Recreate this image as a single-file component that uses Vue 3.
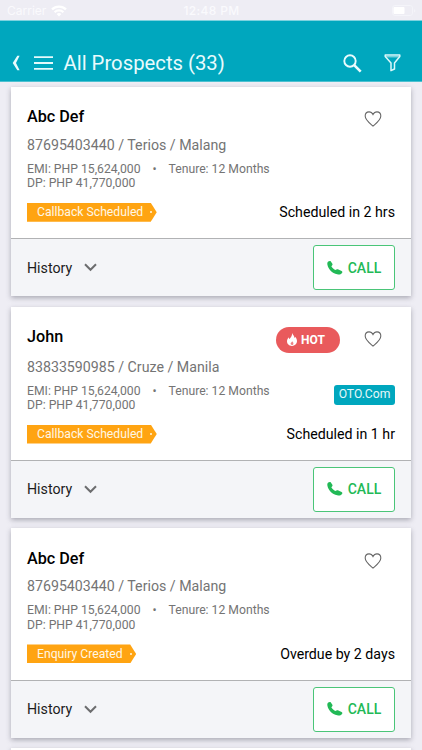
<script setup>
const prospects = [
  { name: 'Abc Def', info: '87695403440 / Terios / Malang', status: 'Callback Scheduled', due: 'Scheduled in 2 hrs' },
  { name: 'John', info: '83833590985 / Cruze / Manila', status: 'Callback Scheduled', due: 'Scheduled in 1 hr', hot: true, source: 'OTO.Com' },
  { name: 'Abc Def', info: '87695403440 / Terios / Malang', status: 'Enquiry Created', due: 'Overdue by 2 days' },
]
</script>

<template>
  <div class="screen">
    <div class="statusbar">
      <div class="carrier">
        <span>Carrier</span>
        <svg width="16" height="12" viewBox="0 0 16 12" fill="none" stroke="#fff" stroke-width="2.2">
          <path d="M1 4.4a10 10 0 0 1 14 0M3.6 7.2a6.3 6.3 0 0 1 8.8 0" />
          <path d="M8 11.5 5.6 9.1a3.4 3.4 0 0 1 4.8 0z" fill="#fff" stroke="none" />
        </svg>
      </div>
      <div class="clock">12:48 PM</div>
      <div class="battery">
        <svg width="24" height="12" viewBox="0 0 24 12">
          <rect x=".5" y=".5" width="20" height="10" rx="2.5" fill="none" stroke="#f4f4f9" />
          <rect x="1.5" y="2" width="11" height="7" rx="1" fill="#fff" />
          <path d="M22 4v3.5q1.300-.6 1.300-1.750T22 4z" fill="#f4f4f9" />
        </svg>
      </div>
    </div>

    <header class="appbar">
      <svg class="back" width="8" height="16" viewBox="0 0 8 16" fill="#e9fbfd"><path d="M5.300.8H7.600L4 8l3.600 7.200H5.300L.7 8z" /></svg>
      <svg class="menu" width="19" height="14" viewBox="0 0 19 14" fill="#e4fafc">
        <path d="M0 .2h19v1.900H0zM0 6.100h19v1.900H0zM0 11.900h19v1.900H0z" />
      </svg>
      <h1>All Prospects (33)</h1>
      <svg class="search" width="19" height="19" viewBox="0 0 19 19" fill="none" stroke="#e9fbfd">
        <circle cx="7" cy="7" r="5.700" stroke-width="1.900" />
        <path d="M11.200 11.200 17.700 17.700" stroke-width="2.600" />
      </svg>
      <svg class="filter" width="17" height="18" viewBox="0 0 17 18" fill="none" stroke="#dcf8fa" stroke-width="1.500" stroke-linejoin="round">
        <path d="M1.200 1h14.600v1.600L10.500 9v6l-3.500 1.700V9L1.200 2.600z" /><path d="M1.500 2.800h14" stroke-width=".8" />
      </svg>
    </header>

    <main class="list">
      <article v-for="(p, i) in prospects" :key="i" class="card">
        <div class="body">
          <div class="top" :class="{ tall: p.hot }">
            <h2>{{ p.name }}</h2>
            <span v-if="p.hot" class="hot">
              <svg width="10" height="13" viewBox="0 0 10 13"><path d="M5.100 0C6 2.200 7.500 3 7.500 5.100c.5-.3.600-.8.600-1.300C9.300 5 10 6.600 10 8.100 10 11 7.800 13 5 13S0 11 0 8.300c0-1.900 1-3 1.700-4.100.1 1 .4 1.500.8 1.700C3.900 4.600 5.200 2.700 5.100 0z" fill="#fff" /><path d="M5.100 8.200c.7.900 1.300 1.300 1.300 2.200S5.800 12 5 12s-1.400-.6-1.400-1.400c0-.6.300-.9.600-1.200.5-.1.700-.5.900-1.200z" fill="#ee8284" /></svg>
              HOT
            </span>
            <svg class="heart" width="18" height="16" viewBox="0 0 19 17" fill="none" stroke="#666" stroke-width="1.150">
              <path d="M9.500 16C6.500 13.300 1.200 9.600 1.200 5.300 1.200 2.700 3 .9 5.300.9c1.800 0 3.300 1 4.200 2.900C10.400 1.900 11.900.9 13.700.9c2.300 0 4.100 1.800 4.100 4.400 0 4.300-5.300 8-8.300 10.700z" />
            </svg>
          </div>
          <p class="info">{{ p.info }}</p>
          <div class="details">
            <div class="terms">
              <div>EMI: PHP 15,624,000<span class="dot">•</span>Tenure: 12 Months</div>
              <div>DP: PHP 41,770,000</div>
            </div>
            <span v-if="p.source" class="source">{{ p.source }}</span>
          </div>
          <div class="state">
            <span class="tag">{{ p.status }}<i></i></span>
            <span class="due">{{ p.due }}</span>
          </div>
        </div>
        <footer class="foot">
          <span class="history">History</span>
          <svg class="chevron" width="13" height="9" viewBox="0 0 13 9" fill="none" stroke="#6c6d6f" stroke-width="2"><path d="m1 1.300 5.500 5.500L12 1.300" /></svg>
          <button class="call">
            <svg width="16" height="16" viewBox="0 0 17 16" fill="#22b956"><path d="M1.300 1.200C2.200.4 3.500.2 4.100 1l1.600 2.500c.4.700.2 1.500-.6 2.100l-.5.500c1.100 2 2.600 3.300 4.700 4.100l.7-.5c.6-.5 1.400-.6 2.100-.2l3.400 1.600c1 .5 1.100 1.300.4 2.200-1.200 1.500-2.900 2-5 1.400C5.300 13.500 1.200 9.300.4 4.300.2 3 .5 1.900 1.300 1.200z" /></svg>
            CALL
          </button>
        </footer>
      </article>
      <article class="card next"></article>
    </main>
  </div>
</template>

<style>
body { margin: 0; background: #eeedf4; }
</style>

<style scoped>
.screen { width: 422px; height: 750px; overflow: hidden; background: #eeedf4; font-family: Roboto, "Liberation Sans", sans-serif; color: #000; }
.statusbar { height: 20px; display: grid; grid-template-columns: 1fr auto 1fr; align-items: center; padding: 2px 6px 0 7px; box-sizing: border-box; color: #fff; font: 12px/18px Inter, sans-serif; }
.carrier { display: flex; align-items: center; gap: 5px; color: #fafafd; }
.clock { font-weight: 500; letter-spacing: .35px; color: #fafafd; }
.battery { display: flex; justify-content: flex-end; }
.appbar { height: 62px; box-sizing: border-box; background: #00a7be; border-top: 1px solid #7dd2df; border-bottom: 1px solid #4dc1d0; display: flex; align-items: center; padding: 24px 21px 0 12px; }
.menu { margin-left: 14px; }
h1 { margin: 0 auto 0 10.500px; font-size: 20.300px; font-weight: 400; line-height: 24px; color: #e9fbfd; white-space: nowrap; }
.filter { margin-left: 22.500px; }
.list { padding: 4.800px 11px 0; display: flex; flex-direction: column; gap: 10.500px; }
.card { background: #fff; box-shadow: 0 2px 5px rgba(60, 60, 75, .38); }
.next { height: 20px; }
.body { padding: 17px 16px 16.300px; }
.top { display: flex; height: 26px; margin-bottom: 5px; align-items: center; }
.tall { margin-bottom: 7px; }
h2 { margin: 0 auto 0 0; padding-top: 1px; font-size: 16.200px; font-weight: 500; line-height: 26px; }
.heart { margin: 5px 13.500px 0 0; }
.hot { width: 64px; height: 26px; box-sizing: border-box; padding-right: 4px; margin: 6px 23.500px 0 0; border-radius: 13px; background: #e95a5c; color: #fff; font-size: 12px; font-weight: 700; display: flex; align-items: center; justify-content: center; gap: 4px; }
.info { margin: 0 0 7px; height: 20px; font-size: 14.200px; line-height: 20px; color: #747474; white-space: nowrap; }
.details { height: 29px; display: flex; justify-content: space-between; align-items: flex-start; font-size: 12.200px; line-height: 14.500px; color: #747474; white-space: nowrap; }
.dot { display: inline-block; width: 28px; text-align: center; }
.source { margin-top: 1px; width: 61px; height: 20px; box-sizing: border-box; border-radius: 3px; background: #00a7be; color: #e6f8fa; font-size: 12.150px; line-height: 19px; text-align: center; }
.state { margin-top: 12px; height: 19px; display: flex; justify-content: space-between; align-items: center; }
.tag { display: flex; align-items: center; height: 19px; padding: 0 4.500px 0 10px; background: #ffa412; color: #fff7e5; font-size: 12.200px; clip-path: polygon(0 0, calc(100% - 6px) 0, 100% 50%, calc(100% - 6px) 100%, 0 100%); }
.tag i { width: 2px; height: 2px; margin-left: 7px; border-radius: 50%; background: #fff7e5; }
.due { font-size: 14.200px; line-height: 20px; }
.foot { height: 58px; box-sizing: border-box; border-top: 1px solid #b1b2b4; background: #f4f5f8; display: flex; align-items: center; padding: 0 16px; }
.history { font-size: 14.200px; color: #1c1c1c; }
.chevron { margin-left: 12px; }
.call { margin-left: auto; width: 82px; height: 45px; box-sizing: border-box; border: 1px solid #4ac578; border-radius: 3px; background: #fff; color: #22b956; font: 500 14px Roboto, sans-serif; display: flex; align-items: center; justify-content: center; gap: 5px; padding: 0; }
</style>
